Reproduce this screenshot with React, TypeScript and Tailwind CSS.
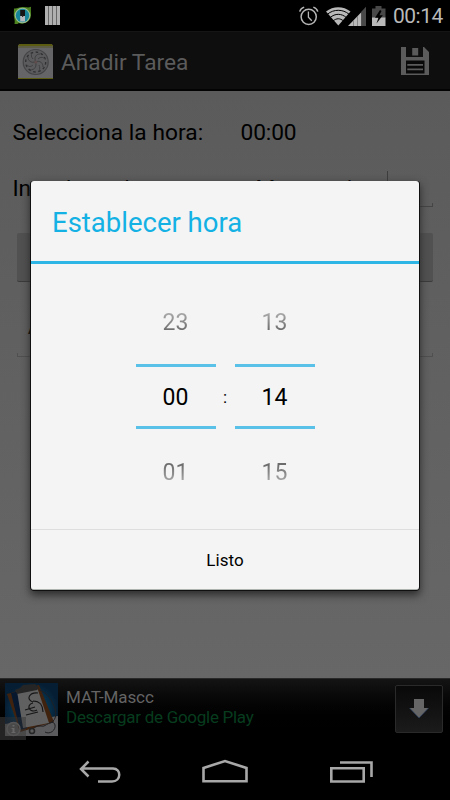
import clsx from 'clsx';

function StatusBar() {
  return (
    <header className="flex h-[31px] items-center bg-black pl-[13px] pr-[7px]">
      <svg width="20" height="20" viewBox="0 0 20 20">
        <path d="M1 2.500C4 3 6 1 9.500 1 13 1 15 2 18 .8 17.500 6 19 9 17 13 14 17.500 9 18.500 6 17 4 18.500 3 18 1.500 18 2.500 14 .5 11 .8 8Z" fill="#4d8420" />
        <circle cx="9.500" cy="9.500" r="7.800" fill="#9dbb94" />
        <circle cx="9.500" cy="9.500" r="6.700" fill="#16859a" />
        <path d="M7.200 4h4.800v6H7.200z" fill="#171513" />
        <path d="M7.200 10h4.800v5.500H7.200z" fill="#b7b8bb" />
        <path d="M9 9.500h1.200v1.500H9z" fill="#333" />
      </svg>
      <svg className="ml-3" width="15" height="19" viewBox="0 0 15 19">
        <path d="M0 0h15v19H0z" fill="#b0b0b0" />
        <path d="M3.500 0v19M7.500 0v19M11.500 0v19" stroke="#666" strokeWidth="1" />
      </svg>
      <svg className="ml-auto" width="20" height="20" viewBox="0 0 20 20" fill="none" stroke="#b5b5b5">
        <circle cx="9.700" cy="10.800" r="7.600" strokeWidth="1.500" />
        <path d="M9.400 5.500v5.800l3.400 3.400" strokeWidth="1.300" />
        <path d="M.7 5.600C1.300 3.400 3 1.800 5.200 1.100M18.800 5.600C18.200 3.400 16.500 1.800 14.300 1.100" strokeWidth="1.500" />
      </svg>
      <svg className="ml-[7px]" width="40" height="20" viewBox="0 0 40 20">
        <path d="M0 5.500C7-.3 17.500-.3 24.500 5.500L12.300 19.500Z" fill="#b9b9b9" />
        <path d="M1.500 8.200C7.500 3 17 3 23 8.200M4 11.700C9 7.200 15.500 7.200 20.500 11.700M7 15C10.500 12 14 12 17.500 15" fill="none" stroke="#000" strokeWidth="1" />
        <path d="M22 20 35.500 6V20Z" fill="#b9b9b9" />
        <path d="M35.500 20V5.500L40 .8V20Z" fill="#484848" />
        <path d="M27.500 14v6M31.500 10v10" stroke="#777" strokeWidth=".8" />
      </svg>
      <svg className="ml-[6px]" width="14" height="20" viewBox="0 0 14 20">
        <path d="M0 2.500h3.500V0h6v2.500H13.500V12H0Z" fill="#484848" />
        <path d="M0 11.500h13.500V20H0Z" fill="#b9b9b9" />
        <path d="M8 4 3 11.700h3.400L4.500 17.500 10.800 9.300H7.400L9.500 5Z" fill="#000" />
      </svg>
      <span className="ml-[7px] w-[50px] whitespace-nowrap pt-[2px] text-[21px] leading-[29px] tracking-[-0.5px] text-[#b9b9b9]">00:14</span>
    </header>
  );
}

function AppIcon() {
  return (
    <svg className="mt-[2px]" width="35" height="35" viewBox="0 0 35 35">
      <path d="M0 1.500 1.500 0h32L35 1.500V35H0Z" fill="#656568" />
      <path d="M0 1.500 1.500 0h32L35 1.500V2H0ZM0 34h35v1H0Z" fill="#5c5b12" />
      <path d="M0 2h35v2H0Z" fill="#5d5d45" />
      <circle cx="17.700" cy="18" r="12.500" fill="#5b5b5d" stroke="#444446" strokeWidth="1.200" />
      <circle cx="17.700" cy="18" r="10" fill="none" stroke="#303032" strokeWidth="1.300" strokeDasharray="2.600 2.600" />
      <path d="M17.500 18C13 19 10 17 10 13M17.500 18C16 13 18 10 22 10M17.500 18C22 16 25 19 25 23M17.500 18C19 22 17 26 12 26M9 21c2 2 4 2 6 0M14 9c-1 2-1 4 1 6M26 14c-2-1-4-1-6 1M21 27c1-2 1-4 0-6" fill="none" stroke="#3c3c3e" strokeWidth=".9" />
      <circle cx="17.700" cy="18" r="1.500" fill="#604c4c" />
    </svg>
  );
}

function ActionBar() {
  return (
    <div className="flex h-[60px] items-center border-b-2 border-t border-b-[#030303] border-t-[#151515] bg-[#0e0e0e] pl-[18px] pr-[21px]">
      <AppIcon />
      <h1 className="ml-2 mt-[5px] text-[22.7px] leading-7 text-[#5b5b5b]">Añadir Tarea</h1>
      <svg className="ml-auto" width="28" height="28" viewBox="0 0 28 28">
        <path d="M0 0h5v10h17V0h1l5 5v23H0Z" fill="#5b5b5b" />
        <path d="M11.200 1h6v7.500h-6Z" fill="#5b5b5b" />
        <path d="M5 13.500h18.500v13H5Z" fill="#090909" />
        <path d="M6.300 17h15.700v1.700H6.300ZM6.300 21.500h15.700v1.700H6.300Z" fill="#5b5b5b" />
      </svg>
    </div>
  );
}

// Holo text field underline, with the short ticks at both ends
function FieldLine({ className }: { className?: string }) {
  return <div className={clsx('h-1 border-x border-b', className)} />;
}

function TaskForm() {
  return (
    <main className="h-[587px] bg-linear-to-b from-[#5b5b5b] to-[#676767] text-[22.7px] leading-7 text-black">
      <div className="flex h-14 items-end pl-[12.500px]">
        <span className="w-[228px] whitespace-nowrap tracking-[0.05px]">Selecciona la hora:</span>
        <span className="tracking-[-0.1px]">00:00</span>
      </div>
      <div className="flex h-14 items-end pl-[12.500px]">
        <span className="w-[243px] whitespace-nowrap tracking-[-0.1px]">Introduzca la tarea:</span>
        <span className="w-[131px]">Matematica</span>
        <span className="mb-1 h-7 w-px bg-[#3e3e3e]" />
      </div>
      <FieldLine className="ml-[256px] mr-[17px] border-[#454545]" />
      <div className="mx-[17px] mt-[26px] h-[49px] rounded-xs border-b border-[#3b3b3b] bg-[#515151]" />
      <div className="mt-[30px] pl-[28px] text-[24px] font-bold">Asignatura</div>
      <FieldLine className="mx-[17px] mt-[13px] border-[#505050]" />
    </main>
  );
}

function AdBanner() {
  return (
    <div className="flex h-[62px] border-t border-[#292929] bg-linear-to-b from-[#141414] to-black">
      <svg width="58" height="62" viewBox="0 0 58 62">
        <defs>
          <radialGradient id="sky">
            <stop stopColor="#075474" />
            <stop offset="1" stopColor="#061e34" />
          </radialGradient>
        </defs>
        <path d="M0 38h26v23H0Z" fill="#171717" />
        <path d="M5 4h53v53H5Z" fill="url(#sky)" />
        <path d="M5 45 58 37v20H5Z" fill="#5b5b5d" />
        <path d="M7 15 39 6 54 43 20 53Z" fill="#40230f" />
        <path d="M11 14 20 12 27 49 20 51Z" fill="#06172e" />
        <path d="m17 12 20-4 12 36-26 5Z" fill="#606060" />
        <path d="m15 11 5-2 3-3 12-1 4 4-2 2-20 4Z" fill="#252525" />
        <path d="M38 14C30 13 25 20 33 23M33 24C25 26 30 35 37 31M33 22C40 22 43 27 43 33M25 31l10-3M26 36l12-3" fill="none" stroke="#161618" strokeWidth="1.200" />
        <path d="M39 11c8 2 13 10 16 19 2 7 0 12-5 14M33 50c4-5 8-2 11-3 7-4 10-5 11-1 1 5-5 10-10 7" fill="none" stroke="#202023" />
        <circle cx="32" cy="52" r="2.500" fill="none" stroke="#252525" strokeWidth="1.500" />
        <path d="M0 38h26v23H0Z" fill="#333" fillOpacity=".45" />
        <circle cx="13.500" cy="50" r="6.500" fill="none" stroke="#555" strokeWidth="1.500" />
        <path d="M12.500 46h2v1.500h-2ZM11.500 49h3v4h1v1h-4v-1h1v-3h-1Z" fill="#666" />
      </svg>
      <div className="ml-2 pt-[8px] text-[17px] leading-5">
        <p className="tracking-[-0.1px] text-[#646464]">MAT-Mascc</p>
        <p className="tracking-[-0.28px] text-[#073c1e]">Descargar de Google Play</p>
      </div>
      <div className="ml-auto mr-[7px] mt-[6px] flex size-12 items-center justify-center rounded-xs border border-[#2a2a2a] bg-linear-to-b from-[#090909] to-[#1b1b1b]">
        <svg width="20" height="20" viewBox="0 0 20 20">
          <path d="M5 0h10v9h4.500L10 19 .5 9H5Z" fill="#666" />
          <path d="M.5 9 10 19 19.500 9" fill="none" stroke="#293d60" strokeWidth=".7" />
        </svg>
      </div>
    </div>
  );
}

function NavBar() {
  return (
    <nav className="flex h-[60px] items-start bg-black pl-[78px] pt-[18px]">
      <svg width="44" height="26" viewBox="0 0 44 26" fill="none" stroke="#a8a8a8" strokeWidth="2.500">
        <path d="M10.500 3.500 3 11l7.500 7.500M3 10.500h32C43.500 10.500 43.500 23.500 34 23.500H20" />
      </svg>
      <svg className="ml-[79px]" width="48" height="26" viewBox="0 0 48 26" fill="none" stroke="#a8a8a8" strokeWidth="2.600">
        <path d="M2.500 10 24 3l21.500 7v13.300h-43Z" />
      </svg>
      <svg className="ml-[80px]" width="46" height="26" viewBox="0 0 46 26" fill="none" stroke="#a8a8a8" strokeWidth="2.600">
        <path d="M2.300 10.300h32.400v13.200H2.300ZM11 4.500h31.500V19" />
      </svg>
    </nav>
  );
}

function Wheel({ values }: { values: string[] }) {
  const [prev, current, next] = values;
  return (
    <div className="w-20 text-center text-[23px] leading-[28px]">
      <div className="h-[60px] pt-[5px]">
        <span className="bg-linear-to-b from-[#a5a5a5] from-20% to-[#6c6c6c] to-80% bg-clip-text text-transparent">{prev}</span>
      </div>
      <div className="h-[65px] border-y-[3px] border-[#59c1e7] pt-[17px] text-black">{current}</div>
      <div className="pt-[30px]">
        <span className="bg-linear-to-b from-[#6c6c6c] from-20% to-[#a5a5a5] to-80% bg-clip-text text-transparent">{next}</span>
      </div>
    </div>
  );
}

function TimeDialog() {
  return (
    <div className="absolute left-[31px] top-[181px] flex h-[409px] w-[388px] flex-col rounded-[3px] border-b border-[#aeb3af] bg-[#f4f4f4] shadow-[1px_0_0_0_#101010,-1px_0_0_0_#101010,0_1px_0_0_#101010,0_4px_8px_1px_#2b2b2b]">
      <h2 className="h-[80px] pl-[21px] pt-[24px] text-[27.500px] leading-9 text-[#13b1e4]">Establecer hora</h2>
      <div className="h-[3px] bg-[#2db5e5]" />
      <div className="flex h-[265px] justify-center pt-[40px]">
        <Wheel values={['23', '00', '01']} />
        <span className="w-[19px] pt-[81px] text-center text-[17px] leading-6 text-black">:</span>
        <Wheel values={['13', '14', '15']} />
      </div>
      <button className="flex-1 border-t border-[#dedede] pt-[3px] text-[17px] tracking-[0.1px] text-black">Listo</button>
    </div>
  );
}

export default function App() {
  return (
    <div className="relative h-[800px] w-[450px] overflow-hidden bg-black font-['Roboto',sans-serif]">
      <StatusBar />
      <ActionBar />
      <TaskForm />
      <AdBanner />
      <NavBar />
      <TimeDialog />
    </div>
  );
}
